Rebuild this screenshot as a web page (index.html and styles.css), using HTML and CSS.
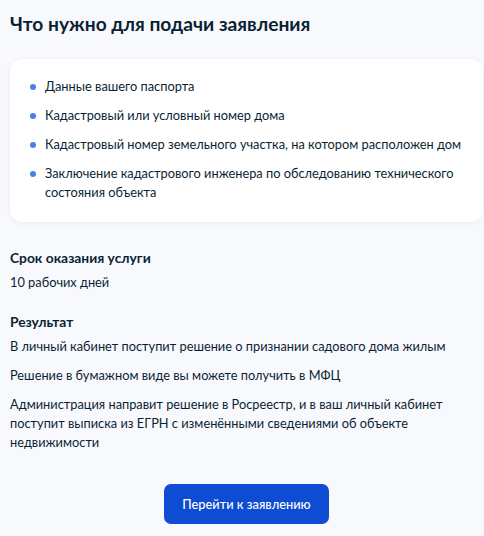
FILE: index.html
```html
<!DOCTYPE html>
<html lang="ru">
<head>
    <meta charset="UTF-8">
    <meta name="viewport" content="width=device-width, initial-scale=1.0">
    <title>Что нужно для подачи заявления</title>
    <link rel="stylesheet" href="styles.css">
</head>
<body>
    <div class="page">
        <h1 class="page-title">Что нужно для подачи заявления</h1>

        <div class="docs-card">
            <ul class="docs-list">
                <li>Данные вашего паспорта</li>
                <li>Кадастровый или условный номер дома</li>
                <li>Кадастровый номер земельного участка, на котором расположен дом</li>
                <li>Заключение кадастрового инженера по обследованию технического состояния объекта</li>
            </ul>
        </div>

        <div class="info-block">
            <h3>Срок оказания услуги</h3>
            <p>10 рабочих дней</p>
        </div>

        <div class="info-block">
            <h3>Результат</h3>
            <p>В личный кабинет поступит решение о признании садового дома жилым</p>
            <p>Решение в бумажном виде вы можете получить в МФЦ</p>
            <p>Администрация направит решение в Росреестр, и в ваш личный кабинет поступит выписка из ЕГРН с изменёнными сведениями об объекте недвижимости</p>
        </div>

        <div class="actions">
            <button type="button" class="btn-primary">Перейти к заявлению</button>
        </div>
    </div>
</body>
</html>
```

FILE: styles.css
```css
body {
  margin: 0;
  background-color: #f8f9fd;
  font-family: Lato, "Open Sans", sans-serif;
  color: #0b1f33;
}

.page {
  padding: 10px 1px 12px 10px;
}

.page-title {
  margin: 0;
  font-size: 19.2px;
  line-height: 28px;
  font-weight: 700;
}

.docs-card {
  margin-top: 21px;
  padding: 18px 16px 20px 21px;
  background-color: #fff;
  border-radius: 12px;
  box-shadow: 0 1px 4px rgba(34, 60, 120, 0.08);
}

.docs-list {
  margin: 0;
  padding: 0;
  list-style: none;
}

.docs-list li {
  position: relative;
  padding-left: 14px;
  font-size: 12.8px;
  line-height: 19px;
  margin-bottom: 10px;
}

.docs-list li:last-child {
  margin-bottom: 0;
}

.docs-list li::before {
  content: "";
  position: absolute;
  left: -1px;
  top: 7px;
  width: 6px;
  height: 6px;
  border-radius: 50%;
  background-color: #4a7df0;
}

.info-block {
  margin-top: 26px;
}

.info-block + .info-block {
  margin-top: 20px;
}

.info-block h3 {
  margin: 0 0 5px;
  font-size: 13.8px;
  line-height: 20px;
  font-weight: 700;
}

.info-block p {
  margin: 0 0 10px;
  font-size: 12.8px;
  line-height: 19px;
}

.actions {
  display: flex;
  justify-content: center;
  margin-top: 32px;
}

.btn-primary {
  width: 165px;
  height: 40px;
  border: none;
  border-radius: 7px;
  background-color: #0d4cd3;
  color: #fff;
  font-family: Lato, "Open Sans", sans-serif;
  font-size: 12.8px;
  font-weight: 500;
  cursor: pointer;
}
```
